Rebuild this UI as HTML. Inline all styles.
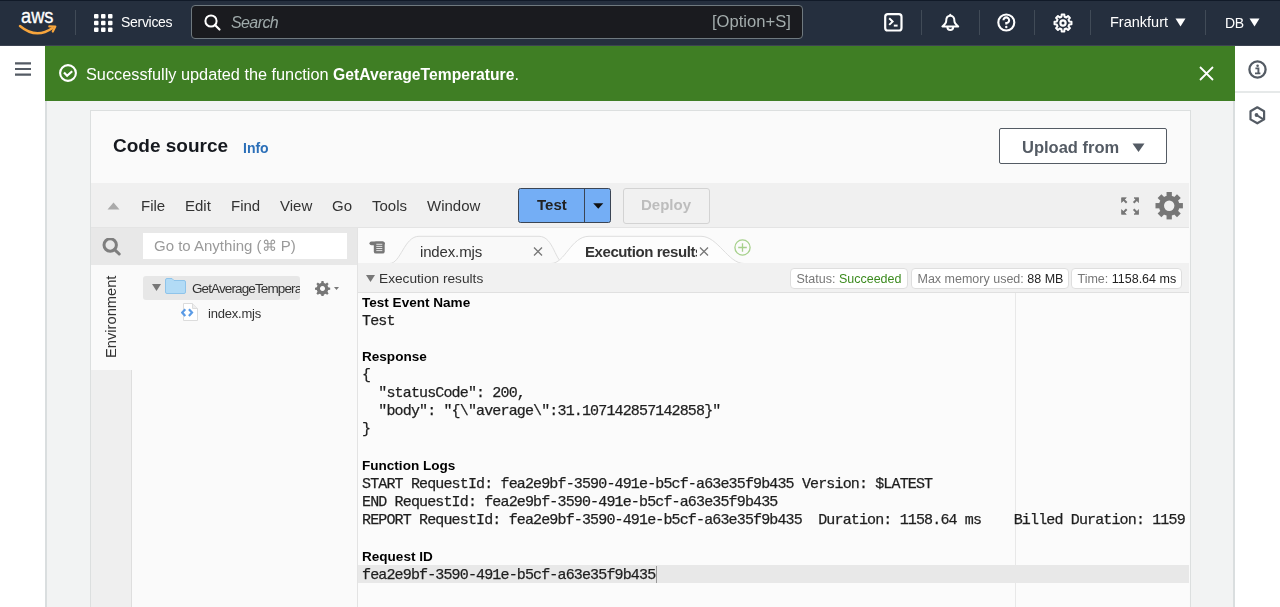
<!DOCTYPE html>
<html><head><meta charset="utf-8">
<style>
*{box-sizing:border-box;margin:0;padding:0}
html,body{width:1280px;height:607px;overflow:hidden;background:#f2f3f3;font-family:"Liberation Sans",sans-serif}
.a{position:absolute}
.t{white-space:pre;position:absolute;line-height:1;will-change:transform}
/* header */
#hdr{left:0;top:0;width:1280px;height:46px;background:#252f3e;box-shadow:inset 0 1px 0 #111a28,inset 0 -1px 0 #3c4352}
.sep{position:absolute;top:10px;width:1px;height:25px;background:#414b57}
.wt{color:#fff}
/* sidebars */
#lsb{left:0;top:46px;width:45px;height:561px;background:#fff}
#rsb{left:1235px;top:46px;width:45px;height:561px;background:#fff}
#flash{left:45px;top:46px;width:1189.5px;height:55px;background:#3f7e24}
/* panel */
#panel{left:89.5px;top:110.3px;width:1101px;height:520px;background:#fafafa;border:1.5px solid #dcdfdf}
#menubar{left:91px;top:183px;width:1098px;height:45px;background:#f0f0f0;border-bottom:1px solid #e4e4e4}
#srow{left:91px;top:228px;width:266px;height:37px;background:#e8e8e8}
#tabbar{left:357px;top:228px;width:832px;height:37px;background:#fbfbfb;border-left:1px solid #dcdcdc}
#envcol{left:91px;top:265px;width:41px;height:342px;background:#efefef;border-right:1px solid #dedede}
#envtab{left:91px;top:265px;width:41px;height:105px;background:#fafafa}
#tree{left:132px;top:265px;width:225px;height:342px;background:#fafafa}
#exbar{left:358px;top:263px;width:831px;height:30px;background:#f1f1f1;border-bottom:1px solid #e0e0e0}
#out{left:358px;top:293px;width:831px;height:314px;background:#fbfbfb;overflow:hidden}
.mono{font-family:"Liberation Mono",monospace;font-size:15px;letter-spacing:-0.855px;color:#1e1e1e;-webkit-text-stroke:0.25px #1e1e1e}
.bh{font-weight:bold;font-size:13.55px;color:#000}
.badge{position:absolute;top:268px;height:21px;background:#fff;border:1px solid #dedede;border-radius:4px;font-size:12.5px;color:#777;white-space:pre;line-height:20.5px;padding-left:5.5px;will-change:transform}
.badge b{font-weight:normal;color:#222}
</style></head><body>
<div id="hdr" class="a">
  <!-- aws logo -->
  <svg class="a" style="left:15px;top:5px" width="50" height="35" viewBox="0 0 50 35">
    <text x="6" y="18" font-family="Liberation Sans" font-size="20.5" fill="#fff" stroke="#fff" stroke-width="0.35" textLength="32.5" lengthAdjust="spacingAndGlyphs">aws</text>
    <path d="M5 21 Q21.2 34.6 37.5 23" stroke="#f7a53c" stroke-width="2.4" fill="none" stroke-linecap="round"/>
    <path d="M34.3 21.4 L40.3 21.5 L37.8 26.6" stroke="#f7a53c" stroke-width="2.2" fill="none" stroke-linecap="round" stroke-linejoin="round"/>
  </svg>
  <div class="sep" style="left:75px"></div>
  <!-- grid -->
  <svg class="a" style="left:94px;top:14px" width="19" height="18" viewBox="0 0 19 18">
    <g fill="#fff">
    <rect x="0" y="0" width="4.5" height="4.5" rx="1"/><rect x="7" y="0" width="4.5" height="4.5" rx="1"/><rect x="14" y="0" width="4.5" height="4.5" rx="1"/>
    <rect x="0" y="6.7" width="4.5" height="4.5" rx="1"/><rect x="7" y="6.7" width="4.5" height="4.5" rx="1"/><rect x="14" y="6.7" width="4.5" height="4.5" rx="1"/>
    <rect x="0" y="13.4" width="4.5" height="4.5" rx="1"/><rect x="7" y="13.4" width="4.5" height="4.5" rx="1"/><rect x="14" y="13.4" width="4.5" height="4.5" rx="1"/>
    </g>
  </svg>
  <div class="t wt" style="left:121px;top:15px;font-size:14px;letter-spacing:-0.3px">Services</div>
  <!-- search -->
  <div class="a" style="left:191px;top:5px;width:612px;height:34px;background:#1a1b1f;border:1.5px solid #6f797f;border-radius:4px"></div>
  <svg class="a" style="left:204px;top:14px" width="18" height="18" viewBox="0 0 18 18">
    <circle cx="7" cy="7" r="5.6" stroke="#fff" stroke-width="2" fill="none"/>
    <path d="M11 11 L15.5 15.5" stroke="#fff" stroke-width="2.2" stroke-linecap="round"/>
  </svg>
  <div class="t" style="left:231px;top:15px;font-size:16px;font-style:italic;color:#a0abab;letter-spacing:-0.6px">Search</div>
  <div class="t" style="left:712px;top:14px;font-size:16.6px;color:#a3acac">[Option+S]</div>
  <!-- right icons -->
  <svg class="a" style="left:884px;top:13px" width="19" height="19" viewBox="0 0 19 19">
    <rect x="1.2" y="1.2" width="16.3" height="16.3" rx="2.6" stroke="#fff" stroke-width="2.2" fill="none"/>
    <path d="M5.2 5.3 L8.6 8.6 L5.2 11.9" stroke="#fff" stroke-width="2" fill="none"/>
    <path d="M9.8 12.6 H13.6" stroke="#fff" stroke-width="2"/>
  </svg>
  <div class="sep" style="left:921px"></div>
  <svg class="a" style="left:941px;top:13px" width="19" height="19" viewBox="0 0 19 19">
    <path d="M9.3 2.8 C6.3 2.8 5.2 5 5.2 8 C5.2 10 3.6 11.6 1.4 13.4 H17.2 C15 11.6 13.4 10 13.4 8 C13.4 5 12.3 2.8 9.3 2.8 Z" stroke="#fff" stroke-width="2" fill="none" stroke-linejoin="round"/>
    <circle cx="9.3" cy="1.9" r="1.1" fill="#fff"/>
    <path d="M6.4 14 A2.9 2.9 0 0 0 12.2 14" stroke="#fff" stroke-width="2" fill="none"/>
  </svg>
  <div class="sep" style="left:979px"></div>
  <svg class="a" style="left:997px;top:13px" width="19" height="19" viewBox="0 0 19 19">
    <circle cx="9.3" cy="9.5" r="8" stroke="#fff" stroke-width="2.1" fill="none"/>
    <path d="M6.5 7.3 A2.8 2.8 0 1 1 9.3 10 V11.4" stroke="#fff" stroke-width="2.1" fill="none"/>
    <circle cx="9.3" cy="14" r="1.2" fill="#fff"/>
  </svg>
  <div class="sep" style="left:1034px"></div>
  <svg class="a" style="left:1053px;top:13px" width="20" height="20" viewBox="0 0 20 20">
    <path d="M8.48 3.78 L8.65 1.51 L11.35 1.51 L11.52 3.78 L13.32 4.53 L15.05 3.04 L16.96 4.95 L15.47 6.68 L16.22 8.48 L18.49 8.65 L18.49 11.35 L16.22 11.52 L15.47 13.32 L16.96 15.05 L15.05 16.96 L13.32 15.47 L11.52 16.22 L11.35 18.49 L8.65 18.49 L8.48 16.22 L6.68 15.47 L4.95 16.96 L3.04 15.05 L4.53 13.32 L3.78 11.52 L1.51 11.35 L1.51 8.65 L3.78 8.48 L4.53 6.68 L3.04 4.95 L4.95 3.04 L6.68 4.53 Z" stroke="#fff" stroke-width="2" fill="none" stroke-linejoin="round"/>
    <circle cx="10" cy="10" r="2.6" stroke="#fff" stroke-width="2.2" fill="none"/>
  </svg>
  <div class="sep" style="left:1090px"></div>
  <div class="t wt" style="left:1110px;top:15.4px;font-size:14.5px">Frankfurt</div>
  <svg class="a" style="left:1175px;top:18px" width="11" height="9" viewBox="0 0 11 9"><path d="M0.5 0.5 H10.5 L5.5 8.5 Z" fill="#fff"/></svg>
  <div class="sep" style="left:1205px"></div>
  <div class="t wt" style="left:1225px;top:15.8px;font-size:14px;letter-spacing:-0.3px">DB</div>
  <svg class="a" style="left:1249px;top:18px" width="11" height="9" viewBox="0 0 11 9"><path d="M0.5 0.5 H10.5 L5.5 8.5 Z" fill="#fff"/></svg>
</div>

<div class="a" style="left:45px;top:46px;width:1.6px;height:561px;background:#dadedf"></div>
<div class="a" style="left:1233.4px;top:46px;width:1.6px;height:561px;background:#dadedf"></div>
<div id="lsb" class="a">
  <svg class="a" style="left:15px;top:16px" width="17" height="15" viewBox="0 0 17 15">
    <path d="M0 1.3 H16 M0 7 H16 M0 12.7 H16" stroke="#545b64" stroke-width="2.2"/>
  </svg>
</div>
<div id="rsb" class="a">
  <svg class="a" style="left:13px;top:14px" width="19" height="19" viewBox="0 0 19 19">
    <circle cx="9.5" cy="9.5" r="8.1" stroke="#545b64" stroke-width="2.3" fill="none"/>
    <circle cx="9.6" cy="5.7" r="1.3" fill="#545b64"/>
    <path d="M7.4 8.4 H10.4 V13.2 M7 13.4 H12.4" stroke="#545b64" stroke-width="1.9" fill="none"/>
  </svg>
  <div class="a" style="left:0px;top:45px;width:45px;height:2px;background:#e6e9e9"></div>
  <svg class="a" style="left:14px;top:60px" width="18" height="19" viewBox="0 0 18 19">
    <path d="M8.3 1.3 L15.1 5.2 V13.4 L8.3 17.3 L1.5 13.4 V5.2 Z" stroke="#545b64" stroke-width="2.2" fill="none" stroke-linejoin="round"/>
    <circle cx="7.5" cy="9" r="1.9" fill="#545b64"/>
    <path d="M7.5 9 L14 13.2" stroke="#545b64" stroke-width="2"/>
  </svg>
</div>
<div id="flash" class="a">
  <svg class="a" style="left:14px;top:18px" width="19" height="19" viewBox="0 0 19 19">
    <circle cx="9" cy="9" r="7.9" stroke="#fff" stroke-width="2.1" fill="none"/>
    <path d="M5 8.6 L8.1 11.8 L13.2 7.3" stroke="#fff" stroke-width="2.2" fill="none"/>
  </svg>
  <div class="t wt" style="left:41px;top:19.5px;font-size:16.3px">Successfully updated the function <b style="font-size:15.7px">GetAverageTemperature</b>.</div>
  <svg class="a" style="left:1154px;top:20px" width="15" height="15" viewBox="0 0 15 15">
    <path d="M1 1 L14 14 M14 1 L1 14" stroke="#fff" stroke-width="1.8"/>
  </svg>
</div>

<div id="panel" class="a"></div>
<div class="t" style="left:113px;top:136.3px;font-size:19px;font-weight:bold;color:#16191f">Code source</div>
<div class="t" style="left:243px;top:141px;font-size:14px;font-weight:bold;color:#2b6fb8">Info</div>
<div class="a" style="left:999px;top:128px;width:168px;height:36px;border:1px solid #545b64;border-radius:2px;background:#fff"></div>
<div class="t" style="left:1022px;top:138.5px;font-size:16.5px;font-weight:bold;color:#545b64">Upload from</div>
<svg class="a" style="left:1132px;top:143px" width="13" height="10" viewBox="0 0 13 10"><path d="M0.5 0.5 H12.5 L6.5 9 Z" fill="#545b64"/></svg>

<div id="menubar" class="a"></div>
<svg class="a" style="left:107px;top:202px" width="13" height="8" viewBox="0 0 13 8"><path d="M0.5 7.5 L6.5 0.5 L12.5 7.5 Z" fill="#aaa"/></svg>
<div class="t" style="left:141px;top:197.8px;font-size:15px;color:#333">File</div>
<div class="t" style="left:185px;top:197.8px;font-size:15px;color:#333">Edit</div>
<div class="t" style="left:231px;top:197.8px;font-size:15px;color:#333">Find</div>
<div class="t" style="left:280px;top:197.8px;font-size:15px;color:#333">View</div>
<div class="t" style="left:332px;top:197.8px;font-size:15px;color:#333">Go</div>
<div class="t" style="left:372px;top:197.8px;font-size:15px;color:#333">Tools</div>
<div class="t" style="left:427px;top:197.8px;font-size:15px;color:#333">Window</div>
<div class="a" style="left:518px;top:187.5px;width:93px;height:35.8px;background:#74aef5;border:1.2px solid #3b4554;border-radius:2.5px"></div>
<div class="a" style="left:584px;top:188px;width:1.2px;height:35px;background:#3b4554"></div>
<div class="t" style="left:537px;top:196.5px;font-size:15px;font-weight:bold;color:#222">Test</div>
<svg class="a" style="left:592.5px;top:202.8px" width="11" height="6" viewBox="0 0 11 6"><path d="M0.2 0.2 H10.3 L5.25 5.8 Z" fill="#111"/></svg>
<div class="a" style="left:623px;top:187.5px;width:87px;height:36px;background:#f1f1f1;border:1px solid #d3d3d3;border-radius:3px"></div>
<div class="t" style="left:641px;top:197px;font-size:15px;font-weight:bold;color:#bdbdbd">Deploy</div>
<!-- expand icon -->
<svg class="a" style="left:1120.5px;top:196.8px" width="18.3" height="18" viewBox="0 0 19.4 19.1">
  <g fill="#777" stroke="#777" stroke-width="2.2">
  <path d="M0.6 0.8 H5.6 L0.6 5.8 Z" stroke-width="0.8"/><path d="M1.5 1.7 L6 6.2"/>
  <path d="M18.8 0.8 H13.8 L18.8 5.8 Z" stroke-width="0.8"/><path d="M17.9 1.7 L13.4 6.2"/>
  <path d="M0.6 18.4 H5.6 L0.6 13.4 Z" stroke-width="0.8"/><path d="M1.5 17.5 L6 13"/>
  <path d="M18.8 18.4 H13.8 L18.8 13.4 Z" stroke-width="0.8"/><path d="M17.9 17.5 L13.4 13"/>
  </g>
</svg>
<svg class="a" style="left:1155px;top:192px" width="28" height="28" viewBox="0 0 28 28">
  <g fill="#777" transform="translate(14.2 13.7)">
    <circle r="10.3"/>
    <rect x="-2.65" y="-13.7" width="5.3" height="6" transform="rotate(0)"/>
    <rect x="-2.65" y="-13.7" width="5.3" height="6" transform="rotate(45)"/>
    <rect x="-2.65" y="-13.7" width="5.3" height="6" transform="rotate(90)"/>
    <rect x="-2.65" y="-13.7" width="5.3" height="6" transform="rotate(135)"/>
    <rect x="-2.65" y="-13.7" width="5.3" height="6" transform="rotate(180)"/>
    <rect x="-2.65" y="-13.7" width="5.3" height="6" transform="rotate(225)"/>
    <rect x="-2.65" y="-13.7" width="5.3" height="6" transform="rotate(270)"/>
    <rect x="-2.65" y="-13.7" width="5.3" height="6" transform="rotate(315)"/>
    <circle r="5.2" fill="#f0f0f0"/>
  </g>
</svg>

<div id="srow" class="a"></div>
<svg class="a" style="left:102px;top:238px" width="20" height="19" viewBox="0 0 20 19">
  <circle cx="8.2" cy="7" r="6.2" stroke="#7f7f7f" stroke-width="3" fill="none"/>
  <path d="M12.6 11.6 L17.2 16" stroke="#7f7f7f" stroke-width="3" stroke-linecap="round"/>
</svg>
<div class="a" style="left:143px;top:233px;width:204px;height:26px;background:#fff"></div>
<div class="t" style="left:154px;top:238px;font-size:15px;color:#9a9a9a">Go to Anything (⌘ P)</div>

<div id="tabbar" class="a"></div>
<svg class="a" style="left:368.5px;top:241.3px" width="17" height="13" viewBox="0 0 17 13">
  <rect x="0.5" y="0.4" width="15.2" height="3.8" rx="1.9" fill="#777"/>
  <rect x="4.8" y="0.4" width="10.9" height="12.2" rx="2.2" fill="#777"/>
  <path d="M7.3 3.3 H13.3 M7.3 5.4 H13.3 M7.3 7.5 H13.3 M7.3 9.6 H13.3" stroke="#e4e4e4" stroke-width="1"/>
</svg>
<!-- tabs -->
<svg class="a" style="left:385px;top:234px" width="380" height="31" viewBox="0 0 380 31">
  <path d="M4.5 29.5 C16 29.5 19 2.3 34 2.3 H154 C169 2.3 170 29.5 180 29.5" stroke="#dedede" stroke-width="1" fill="#f9f9f9"/>
  <path d="M166 29.5 C180 29.5 186 2.3 204 2.3 H316 C333 2.3 343 29.5 359 29.5" stroke="#dedede" stroke-width="1" fill="#fdfdfd"/>
</svg>
<div class="t" style="left:420px;top:244px;font-size:15px;color:#333;letter-spacing:-0.15px">index.mjs</div>
<svg class="a" style="left:533px;top:247px" width="10" height="9" viewBox="0 0 10 9"><path d="M1 0.5 L9 8.5 M9 0.5 L1 8.5" stroke="#777" stroke-width="1.3"/></svg>
<div class="t" style="left:585px;top:244px;font-size:15px;font-weight:bold;color:#333;width:112px;overflow:hidden;letter-spacing:-0.42px">Execution results</div>
<svg class="a" style="left:699px;top:247px" width="10" height="9" viewBox="0 0 10 9"><path d="M1 0.5 L9 8.5 M9 0.5 L1 8.5" stroke="#777" stroke-width="1.3"/></svg>
<svg class="a" style="left:734px;top:239px" width="17" height="17" viewBox="0 0 17 17">
  <circle cx="8.5" cy="8.5" r="7.6" stroke="#a6d08b" stroke-width="1.3" fill="none"/>
  <path d="M8.5 4.2 V12.8 M4.2 8.5 H12.8" stroke="#a6d08b" stroke-width="1.3"/>
</svg>

<div id="envcol" class="a"></div>
<div id="envtab" class="a"></div>
<div class="t" style="left:104px;top:358px;font-size:14.7px;color:#333;transform:rotate(-90deg);transform-origin:0 0">Environment</div>
<div id="tree" class="a"></div>
<div class="a" style="left:143px;top:276px;width:157px;height:24px;background:#e7e7e7;border-radius:3px"></div>
<svg class="a" style="left:152px;top:284px" width="9" height="7" viewBox="0 0 9 7"><path d="M0 0 H9 L4.5 7 Z" fill="#777"/></svg>
<svg class="a" style="left:165px;top:278px" width="21" height="16" viewBox="0 0 21 16">
  <path d="M0.5 2 Q0.5 0.5 2 0.5 H7 L9 2.5 H19 Q20.5 2.5 20.5 4 V14 Q20.5 15.5 19 15.5 H2 Q0.5 15.5 0.5 14 Z" fill="#b2dbf6" stroke="#8fc4ea" stroke-width="1"/>
</svg>
<div class="a" style="left:192px;top:280px;width:108px;height:17px;overflow:hidden"><div class="t" style="left:0;top:1.5px;font-size:13.5px;color:#333;letter-spacing:-0.88px">GetAverageTemperature</div></div>
<svg class="a" style="left:315px;top:281px" width="25" height="15" viewBox="0 0 25 15">
  <path fill="#777" fill-rule="evenodd" d="M6.5 0 h2 l0.4 2 a5.5 5.5 0 0 1 1.6 0.7 l1.7-1.1 1.4 1.4 -1.1 1.7 a5.5 5.5 0 0 1 0.7 1.6 l2 0.4 v2 l-2 0.4 a5.5 5.5 0 0 1 -0.7 1.6 l1.1 1.7 -1.4 1.4 -1.7-1.1 a5.5 5.5 0 0 1 -1.6 0.7 l-0.4 2 h-2 l-0.4-2 a5.5 5.5 0 0 1 -1.6-0.7 l-1.7 1.1 -1.4-1.4 1.1-1.7 a5.5 5.5 0 0 1 -0.7-1.6 l-2-0.4 v-2 l2-0.4 a5.5 5.5 0 0 1 0.7-1.6 l-1.1-1.7 1.4-1.4 1.7 1.1 a5.5 5.5 0 0 1 1.6-0.7 z M7.5 5 a2.5 2.5 0 1 0 0.01 0 z"/>
  <path d="M19 6 H24 L21.5 9 Z" fill="#777"/>
</svg>
<svg class="a" style="left:181px;top:303px" width="19" height="19" viewBox="0 0 19 19">
  <path d="M2.5 0.5 H11.5 L16.5 5.5 V17.5 H2.5 Z" fill="#fff" stroke="#dcdcdc" stroke-width="1"/>
  <path d="M11.5 0.5 V5.5 H16.5" fill="#eee" stroke="#dcdcdc" stroke-width="1"/>
  <path d="M4.3 6.3 L1.2 9.6 L4.3 12.9 M7.9 6.3 L11 9.6 L7.9 12.9" stroke="#5a9be6" stroke-width="2.2" fill="none"/>
</svg>
<div class="t" style="left:208px;top:307px;font-size:13px;color:#333;letter-spacing:-0.2px">index.mjs</div>

<div id="exbar" class="a"></div>
<svg class="a" style="left:366px;top:275px" width="9" height="7" viewBox="0 0 9 7"><path d="M0 0 H9 L4.5 7 Z" fill="#777"/></svg>
<div class="t" style="left:379px;top:271.5px;font-size:13.7px;color:#333">Execution results</div>
<div class="badge" style="left:790px;width:118px">Status: <span style="color:#3c8b1f">Succeeded</span></div>
<div class="badge" style="left:911px;width:158px">Max memory used: <b>88 MB</b></div>
<div class="badge" style="left:1071px;width:111px">Time: <b>1158.64 ms</b></div>

<div class="a" style="left:357px;top:228px;width:1px;height:379px;background:#e3e3e3"></div>
<div id="out" class="a">
  <div class="a" style="left:657px;top:0;width:1px;height:314px;background:#e8e8e8"></div>
  <div class="a" style="left:0;top:272px;width:831px;height:18px;background:#e8e8e8"></div>
  <div class="a" style="left:298px;top:273px;width:1px;height:17px;background:#999"></div>
</div>
<div class="a" style="left:362px;top:293px;width:827px;height:314px;overflow:hidden">
<div class="t bh" style="left:0;top:3px">Test Event Name</div>
<div class="t mono" style="left:0;top:21px">Test</div>
<div class="t bh" style="left:0;top:57px">Response</div>
<div class="t mono" style="left:0;top:75px">{</div>
<div class="t mono" style="left:0;top:93px">  "statusCode": 200,</div>
<div class="t mono" style="left:0;top:111px">  "body": "{\"average\":31.107142857142858}"</div>
<div class="t mono" style="left:0;top:129px">}</div>
<div class="t bh" style="left:0;top:166px">Function Logs</div>
<div class="t mono" style="left:0;top:184px">START RequestId: fea2e9bf-3590-491e-b5cf-a63e35f9b435 Version: $LATEST</div>
<div class="t mono" style="left:0;top:202px">END RequestId: fea2e9bf-3590-491e-b5cf-a63e35f9b435</div>
<div class="t mono" style="left:0;top:220px">REPORT RequestId: fea2e9bf-3590-491e-b5cf-a63e35f9b435  Duration: 1158.64 ms    Billed Duration: 1159 ms</div>
<div class="t bh" style="left:0;top:257px">Request ID</div>
<div class="t mono" style="left:0;top:275px">fea2e9bf-3590-491e-b5cf-a63e35f9b435</div>
</div>
</body></html>
